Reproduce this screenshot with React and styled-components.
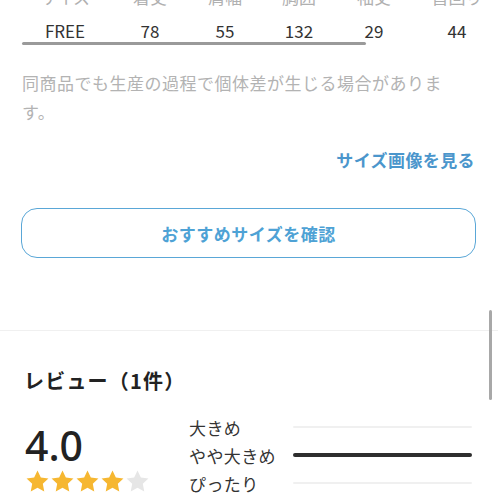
import React from "react";
import styled, { createGlobalStyle } from "styled-components";

const GlobalStyle = createGlobalStyle`
  body {
    margin: 0;
    background: #ffffff;
    font-family: "Noto Sans CJK JP", "Noto Sans", sans-serif;
    color: #333333;
    overflow: hidden;
  }
`;

const Page = styled.div`
  position: relative;
  width: 498px;
  height: 498px;
  overflow: hidden;
`;

const TableScroll = styled.div`
  position: relative;
  margin-top: -20px;
  overflow: hidden;
`;

const Row = styled.div`
  display: grid;
  grid-template-columns: 86px 84px 66px 82px 68px 98px;
  padding-left: 22px;
  height: 34px;
  align-items: center;
  font-size: 17px;
  color: ${(p) => (p.$head ? "#b0b0b0" : "#333333")};
  white-space: nowrap;
`;

const Cell = styled.div`
  text-align: center;
  line-height: 34px;
`;

const ScrollBar = styled.div`
  position: absolute;
  left: 22px;
  bottom: 3px;
  width: 344px;
  height: 3px;
  border-radius: 2px;
  background: #9a9a9a;
`;

const Note = styled.p`
  margin: 20px 0 0;
  padding: 0 40px 0 22px;
  font-size: 17px;
  letter-spacing: 0.5px;
  line-height: 29px;
  color: #b3b3b3;
`;

const LinkRow = styled.div`
  display: flex;
  justify-content: flex-end;
  margin-top: 22px;
  padding-right: 23px;
`;

const TextLink = styled.a`
  font-size: 17px;
  font-weight: 700;
  letter-spacing: 0.4px;
  line-height: 24px;
  color: #4b96cc;
  text-decoration: none;
`;

const ButtonWrap = styled.div`
  padding: 0 22px 0 21px;
  margin-top: 36px;
`;

const OutlineButton = styled.button`
  width: 100%;
  height: 50px;
  border: 1.5px solid #5aa7d7;
  border-radius: 16px;
  background: #ffffff;
  font-family: inherit;
  font-size: 17px;
  font-weight: 700;
  letter-spacing: 0.5px;
  color: #4ea2d5;
`;

const Divider = styled.hr`
  margin: 72px 0 0;
  border: none;
  height: 1px;
  background: #f0f0f0;
`;

const ReviewSection = styled.section`
  padding: 36px 24px 0;
`;

const ReviewTitle = styled.h2`
  margin: 0;
  font-size: 20px;
  font-weight: 700;
  letter-spacing: 1.2px;
  line-height: 28px;
  color: #222222;
`;

const ReviewBody = styled.div`
  display: flex;
  margin-top: 18px;
`;

const ScoreCol = styled.div`
  width: 165px;
  display: flex;
  flex-direction: column;
`;

const Score = styled.div`
  font-family: "Noto Sans", "Liberation Sans", sans-serif;
  font-size: 41px;
  font-weight: 500;
  line-height: 44px;
  margin-top: 10px;
  margin-left: 1px;
  color: #222222;
`;

const Stars = styled.div`
  display: flex;
  gap: 0;
  margin-top: 2px;
  margin-left: 1px;
`;

const FitGrid = styled.div`
  display: grid;
  grid-template-columns: 104px 179px;
  grid-auto-rows: 28px;
  align-items: center;
`;

const FitLabel = styled.div`
  font-size: 17px;
  letter-spacing: 0.4px;
  color: #333333;
  white-space: nowrap;
`;

const FitBar = styled.div`
  height: ${(p) => (p.$active ? "4px" : "2px")};
  border-radius: 2px;
  background: ${(p) => (p.$active ? "#2e2e2e" : "#f0f0f0")};
`;

const PageScroll = styled.div`
  position: absolute;
  right: 6px;
  top: 310px;
  width: 3px;
  height: 90px;
  border-radius: 2px;
  background: #a8a8a8;
`;

const Star = ({ filled }) => (
  <svg width="25" height="25" viewBox="0 0 24 24">
    <path
      d="M12 1.5l3.2 6.7 7.3.9-5.4 5.1 1.4 7.3L12 18l-6.5 3.5 1.4-7.3-5.4-5.1 7.3-.9z"
      fill={filled ? "#f6b731" : "#e6e6e6"}
    />
  </svg>
);

const head = ["サイズ", "着丈", "肩幅", "胸囲", "袖丈", "首回り"];
const values = ["FREE", "78", "55", "132", "29", "44"];
const fits = [
  { label: "大きめ", active: false },
  { label: "やや大きめ", active: true },
  { label: "ぴったり", active: false },
];

export default function App() {
  return (
    <Page>
      <GlobalStyle />
      <TableScroll>
        <Row $head>
          {head.map((h) => (
            <Cell key={h}>{h}</Cell>
          ))}
        </Row>
        <Row>
          {values.map((v, i) => (
            <Cell key={i}>{v}</Cell>
          ))}
        </Row>
        <ScrollBar />
      </TableScroll>

      <Note>同商品でも生産の過程で個体差が生じる場合があります。</Note>

      <LinkRow>
        <TextLink href="#">サイズ画像を見る</TextLink>
      </LinkRow>

      <ButtonWrap>
        <OutlineButton>おすすめサイズを確認</OutlineButton>
      </ButtonWrap>

      <Divider />

      <ReviewSection>
        <ReviewTitle>レビュー（1件）</ReviewTitle>
        <ReviewBody>
          <ScoreCol>
            <Score>4.0</Score>
            <Stars>
              {[1, 2, 3, 4, 5].map((n) => (
                <Star key={n} filled={n <= 4} />
              ))}
            </Stars>
          </ScoreCol>
          <FitGrid>
            {fits.map((f) => (
              <React.Fragment key={f.label}>
                <FitLabel>{f.label}</FitLabel>
                <FitBar $active={f.active} />
              </React.Fragment>
            ))}
          </FitGrid>
        </ReviewBody>
      </ReviewSection>

      <PageScroll />
    </Page>
  );
}
